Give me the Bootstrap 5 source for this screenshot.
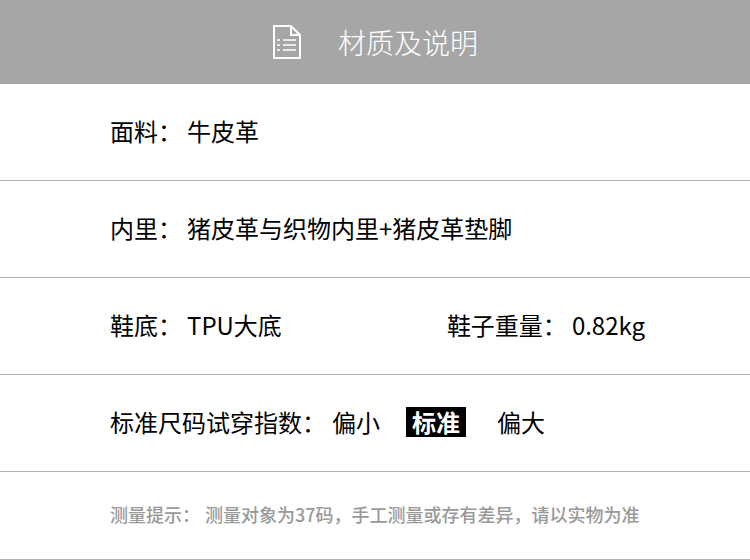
<!DOCTYPE html>
<html lang="zh"><head><meta charset="utf-8">
<link href="https://cdn.jsdelivr.net/npm/bootstrap@5.3.0/dist/css/bootstrap.min.css" rel="stylesheet">
<style>
body{font-family:"Noto Sans CJK SC","Noto Sans",sans-serif;color:#000;background:#fff;overflow:hidden}
.hdr{height:84px;background:#a6a6a6;color:#fff;font-size:28px;font-weight:300;padding-left:273px;gap:37px}
.rw{height:97px;border-bottom:1px solid #b0b0b0;padding:0 0 2px 110px;font-size:24px}
.vl{margin-left:5px}
.vl2{margin-left:6px}
.c2{margin-left:165px}
.hl{background:#000;color:#fff;font-weight:700;padding:0 6px;line-height:30px;margin:0 31px 0 26px}
.nt{height:88px;font-size:18px;color:#999;font-weight:500}
</style></head><body>
<div class="hdr d-flex align-items-center">
<svg width="28" height="34" viewBox="0 0 28 34" fill="none" stroke="#fff" stroke-width="2"><path d="M1 1h17l9 9v23H1z"/><path d="M18 1v9h9"/><path d="M4 15h3M10 15h13M4 20h3M10 20h13M4 25h3M10 25h13" stroke-width="1.5"/></svg>
<span>材质及说明</span></div>
<div class="rw d-flex align-items-center"><span>面料：</span><span class="vl">牛皮革</span></div>
<div class="rw d-flex align-items-center"><span>内里：</span><span class="vl">猪皮革与织物内里+猪皮革垫脚</span></div>
<div class="rw d-flex align-items-center"><span>鞋底：</span><span class="vl">TPU大底</span><span class="c2">鞋子重量：</span><span class="vl">0.82kg</span></div>
<div class="rw d-flex align-items-center"><span>标准尺码试穿指数：</span><span class="vl2">偏小</span><span class="hl">标准</span><span>偏大</span></div>
<div class="rw nt d-flex align-items-center"><span>测量提示：</span><span class="vl">测量对象为37码，手工测量或存有差异，请以实物为准</span></div>
<script src="https://cdn.jsdelivr.net/npm/bootstrap@5.3.0/dist/js/bootstrap.bundle.min.js"></script>
</body></html>
